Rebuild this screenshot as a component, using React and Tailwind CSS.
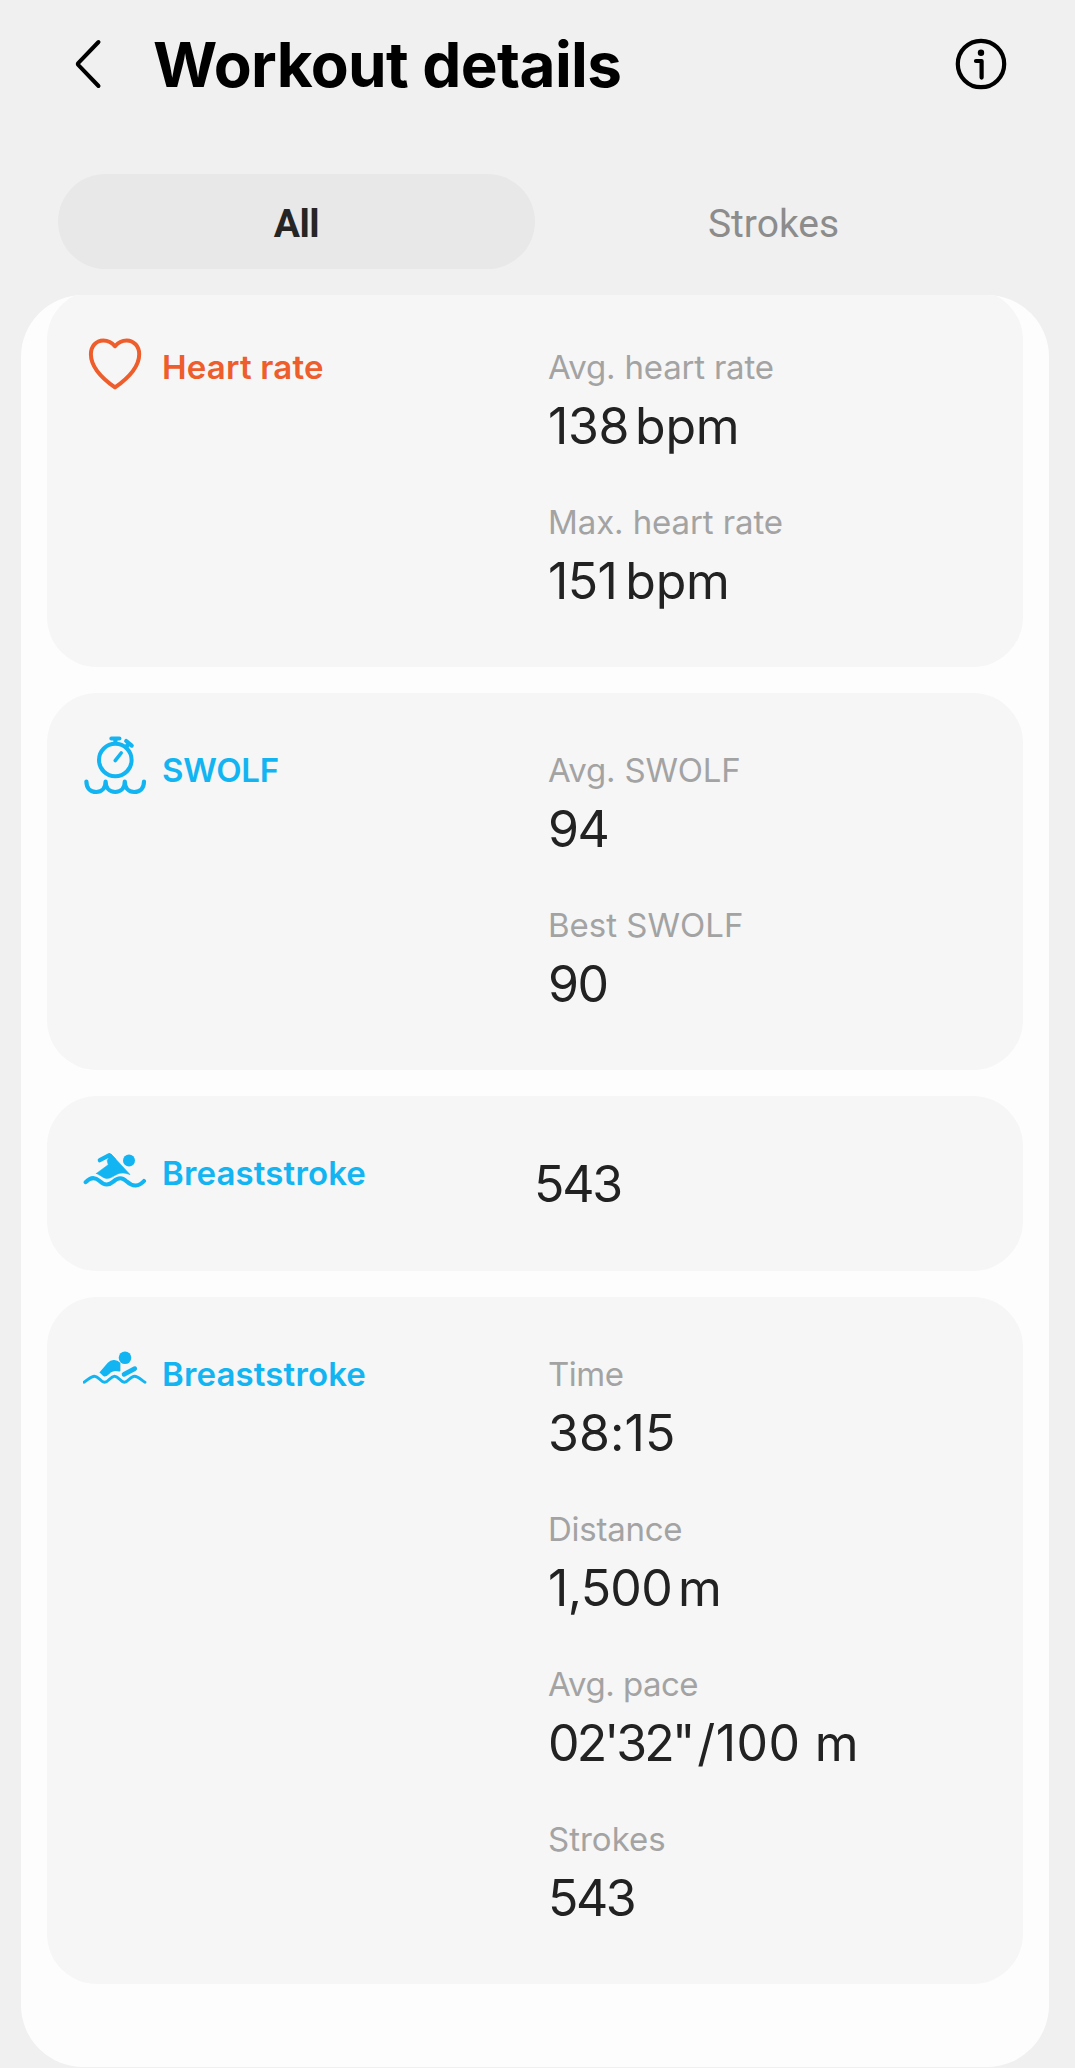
import React, { useState } from 'react';

const HeartIcon = () => (
  <svg viewBox="0 0 64 64" className="w-16 h-16" fill="none" stroke="currentColor" strokeWidth="4" strokeLinejoin="round">
    <path d="M32 15.2C28.6 11 24.4 9.4 20.3 9.4C13 9.4 7.9 15.5 7.9 23.2C7.9 36.5 20 48 32 56.4C44 48 56.2 36.5 56.2 23.2C56.2 15.5 51 9.4 43.7 9.4C39.6 9.4 35.4 11 32 15.2Z" />
  </svg>
);

const SwolfIcon = () => (
  <svg viewBox="0 0 64 64" className="w-16 h-16" fill="none" stroke="currentColor" strokeWidth="4.2" strokeLinecap="round" strokeLinejoin="round">
    <circle cx="32.3" cy="26" r="16.3" strokeWidth="4" />
    <path d="M28.4 4.5H36.4M32.4 5V9" />
    <path d="M43.2 7L48.7 11.6M45.6 9.8L43.6 12.4" />
    <path d="M32.2 26.6L38.2 19" strokeWidth="3.6" />
    <path d="M3.4 47.5C3.4 54 7.4 58 13.2 58C18.8 58 22.6 54 22.6 47.5C22.6 54 26.6 58 32.2 58C37.8 58 41.8 54 41.8 47.5C41.8 54 45.6 58 51.2 58C57 58 61 54 61 47.5" />
  </svg>
);

const SwimIcon = () => (
  <svg viewBox="0 0 64 64" className="w-16 h-16" fill="none" stroke="currentColor" strokeLinecap="round" strokeLinejoin="round">
    <path d="M2.7 45.2C7.5 40 12 39.8 16.6 44C21.5 48.6 25.6 48.6 30.3 44.6C35.3 40.2 39.3 40.2 43.8 44.6C49.6 50 56 49.8 61 44" strokeWidth="4.1" />
    <circle cx="46" cy="23.5" r="6" fill="currentColor" stroke="none" />
    <path d="M16.8 23.2L26.4 18.2L31 23" strokeWidth="4.2" />
    <path d="M13.4 36.4L25.2 27.8L24.2 23.6L28 17L47 37.6C42.8 36.2 38.6 35.2 34.6 37C30.4 38.8 28 41.6 23.6 41.4C19.6 41 17 37.6 13.4 36.4Z" fill="currentColor" strokeWidth="0.6" />
  </svg>
);

const BreaststrokeIcon = () => (
  <svg viewBox="0 0 64 64" className="w-16 h-16" fill="none" stroke="currentColor" strokeLinecap="round" strokeLinejoin="round">
    <path d="M1 44.2C5 42.2 7.2 38.2 11.6 38.2C16 38.2 17.4 44.2 21.6 44.2C25.8 44.2 27.2 38.2 31.6 38.2C36 38.2 37.2 44.2 41.4 44.2C45.6 44.2 47 38.2 51.6 38.2C55.8 38.2 58 42.2 62 44.2" strokeWidth="2.9" />
    <circle cx="42" cy="19.7" r="6.3" fill="currentColor" stroke="none" />
    <path d="M17.4 34.4L25.4 25.2C28 22.4 33 21.4 36.6 25.2V32.8C33.4 31.8 29.6 32 27.2 34C25.2 35.8 23.6 38 21.4 37.8C19.8 37.4 19 35.2 17.4 34.4Z" fill="currentColor" strokeWidth="1.6" />
    <path d="M41 36.4L51.8 30.6" strokeWidth="4.6" />
  </svg>
);

const sections = [
  {
    title: 'Heart rate',
    icon: HeartIcon,
    color: 'text-[#ee5d2c]',
    titleClass: 'tracking-[0.2px]',
    stats: [
      { label: 'Avg. heart rate', labelClass: 'tracking-[-0.2px]', value: '138', unit: 'bpm', valueClass: 'tracking-[-0.4px]', unitClass: 'tracking-[-0.2px]', gap: 'gap-[6px]' },
      { label: 'Max. heart rate', labelClass: 'tracking-[-0.1px]', value: '151', unit: 'bpm', valueClass: 'tracking-[-0.6px]', unitClass: 'tracking-[-0.2px]', gap: 'gap-[8px]' },
    ],
  },
  {
    title: 'SWOLF',
    icon: SwolfIcon,
    color: 'text-[#12b5f2]',
    titleClass: 'tracking-[-0.2px]',
    stats: [
      { label: 'Avg. SWOLF', labelClass: 'tracking-[-0.2px]', value: '94', valueClass: 'tracking-[-1.5px]' },
      { label: 'Best SWOLF', value: '90', valueClass: 'tracking-[-1.5px]' },
    ],
  },
  {
    title: 'Breaststroke',
    icon: SwimIcon,
    color: 'text-[#12b5f2]',
    titleClass: 'tracking-[0.15px]',
    total: '543',
  },
  {
    title: 'Breaststroke',
    icon: BreaststrokeIcon,
    color: 'text-[#12b5f2]',
    titleClass: 'tracking-[0.15px]',
    stats: [
      { label: 'Time', labelClass: 'tracking-[-0.5px]', value: '38:15', valueClass: 'tracking-[0.1px]' },
      { label: 'Distance', labelClass: 'tracking-[-0.25px]', value: '1,500', unit: 'm', valueClass: 'tracking-[-0.7px]', gap: 'gap-[6px]' },
      { label: 'Avg. pace', labelClass: 'tracking-[-0.5px]', value: '02\'32"', unit: '/100 m', valueClass: 'tracking-[-2.9px]', unitClass: 'tracking-[0.4px]', gap: 'gap-[5px]' },
      { label: 'Strokes', value: '543', valueClass: 'tracking-[-2.5px]' },
    ],
  },
];

function Stat({ label, labelClass = '', value, valueClass, unit, unitClass, gap = '' }) {
  return (
    <div>
      <p className={`text-[33px] leading-[48px] text-[#a3a3a3] ${labelClass}`}>{label}</p>
      <p className={`flex text-[50px] leading-[70px] -mb-[2px] text-[#222222] ${gap}`}>
        <span className={valueClass}>{value}</span>
        {unit && <span className={unitClass || valueClass}>{unit}</span>}
      </p>
    </div>
  );
}

function SectionCard({ title, titleClass = '', icon: Icon, color, stats, total }) {
  return (
    <section className="flex rounded-[50px] bg-[#f6f6f6] py-[53px] pl-[36px]">
      <div className={`flex shrink-0 gap-[15px] -mt-3 h-16 ${total ? 'w-[451px]' : 'w-[465px]'} ${color}`}>
        <Icon />
        <h2 className={`pt-[12px] text-[33px] leading-[48px] font-semibold ${titleClass}`}>{title}</h2>
      </div>
      {total ? (
        <p className="text-[50px] leading-[71px] -mb-[2px] tracking-[-2.2px] text-[#222222]">{total}</p>
      ) : (
        <div className="flex flex-col gap-[39px]">
          {stats.map((s) => (
            <Stat key={s.label} {...s} />
          ))}
        </div>
      )}
    </section>
  );
}

export default function App() {
  const [tab, setTab] = useState('All');

  return (
    <div className="w-[1075px] h-[2068px] overflow-hidden bg-[#f0f0f0] font-['Inter',sans-serif]">
      {/* Header */}
      <header className="flex items-center h-[128px] pl-[72px] pr-[67px]">
        <svg viewBox="0 0 32 56" className="w-8 h-14 shrink-0" fill="none" stroke="#000" strokeWidth="4" strokeLinecap="round" strokeLinejoin="round">
          <path d="M26.5 6L6.2 27.2Q5.4 28 6.2 28.8L26.5 50" />
        </svg>
        <h1 className="ml-[49px] pt-[2px] text-[62px] leading-[76px] font-bold tracking-[-0.6px] text-black">Workout details</h1>
        <svg viewBox="0 0 54 54" className="ml-auto w-[54px] h-[54px] shrink-0" fill="none" stroke="#000" strokeLinecap="round" strokeLinejoin="round">
          <circle cx="27" cy="27" r="23.2" strokeWidth="4.2" />
          <circle cx="27" cy="15.8" r="3.2" fill="#000" stroke="none" />
          <path d="M22 24H27.6V40.6" strokeWidth="4.2" />
        </svg>
      </header>

      {/* Tabs */}
      <nav className="flex mt-[46px] mx-[58px] h-[95px] font-['Roboto',sans-serif] text-[39px]">
        {['All', 'Strokes'].map((t) => (
          <button
            key={t}
            onClick={() => setTab(t)}
            className={`w-[477px] shrink-0 rounded-full pt-[5px] ${
              tab === t ? 'bg-[#e8e8e8] font-bold tracking-[-0.5px] text-[#252525]' : 'text-[#8c8c8c]'
            }`}
          >
            {t}
          </button>
        ))}
      </nav>

      {/* Scrolled list */}
      <main className="mt-[26px] ml-[21px] w-[1028px] h-[1772px] overflow-hidden rounded-[62px] bg-[#fdfdfd] px-[26px]">
        <div className="-mt-[5px] flex flex-col gap-[26px]">
          {sections.map((s, i) => (
            <SectionCard key={i} {...s} />
          ))}
        </div>
      </main>
    </div>
  );
}
